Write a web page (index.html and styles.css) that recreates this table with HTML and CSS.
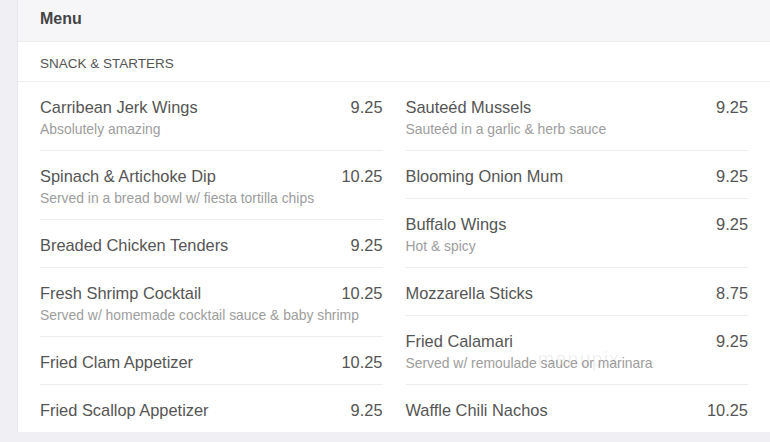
FILE: index.html
```html
<!DOCTYPE html>
<html lang="en">
  <head>
    <meta charset="UTF-8" />
    <meta name="viewport" content="width=device-width, initial-scale=1.0" />
    <title>Menu</title>
    <link rel="stylesheet" href="styles.css">
  </head>

  <body>
    <div class="card">
      <div class="card-header">Menu</div>
      <div class="section-title">SNACK &amp; STARTERS</div>

      <div class="columns">
        <!-- Left column -->
        <div class="column">
          <div class="item">
            <div class="item-row"><span class="name">Carribean Jerk Wings</span><span class="price">9.25</span></div>
            <div class="desc">Absolutely amazing</div>
          </div>
          <div class="item">
            <div class="item-row"><span class="name">Spinach &amp; Artichoke Dip</span><span class="price">10.25</span></div>
            <div class="desc">Served in a bread bowl w/ fiesta tortilla chips</div>
          </div>
          <div class="item">
            <div class="item-row"><span class="name">Breaded Chicken Tenders</span><span class="price">9.25</span></div>
          </div>
          <div class="item">
            <div class="item-row"><span class="name">Fresh Shrimp Cocktail</span><span class="price">10.25</span></div>
            <div class="desc">Served w/ homemade cocktail sauce &amp; baby shrimp</div>
          </div>
          <div class="item">
            <div class="item-row"><span class="name">Fried Clam Appetizer</span><span class="price">10.25</span></div>
          </div>
          <div class="item">
            <div class="item-row"><span class="name">Fried Scallop Appetizer</span><span class="price">9.25</span></div>
          </div>
        </div>

        <!-- Right column -->
        <div class="column">
          <div class="item">
            <div class="item-row"><span class="name">Sauteéd Mussels</span><span class="price">9.25</span></div>
            <div class="desc">Sauteéd in a garlic &amp; herb sauce</div>
          </div>
          <div class="item">
            <div class="item-row"><span class="name">Blooming Onion Mum</span><span class="price">9.25</span></div>
          </div>
          <div class="item">
            <div class="item-row"><span class="name">Buffalo Wings</span><span class="price">9.25</span></div>
            <div class="desc">Hot &amp; spicy</div>
          </div>
          <div class="item">
            <div class="item-row"><span class="name">Mozzarella Sticks</span><span class="price">8.75</span></div>
          </div>
          <div class="item watermarked">
            <div class="item-row"><span class="name">Fried Calamari</span><span class="price">9.25</span></div>
            <div class="desc">Served w/ remoulade sauce or marinara</div>
            <span class="watermark">menupix</span>
          </div>
          <div class="item">
            <div class="item-row"><span class="name">Waffle Chili Nachos</span><span class="price">10.25</span></div>
          </div>
        </div>
      </div>
    </div>
  </body>
</html>
```

FILE: styles.css
```css
body {
  font-family: "Liberation Sans", Arial, sans-serif;
  margin: 0;
  padding: 0 0 8px 17px;
  background-color: #efeff4;
  color: #555;
}

.card {
  background: #fff;
  border-left: 1px solid #e8e8ee;
}

.card-header {
  height: 42px;
  line-height: 38px;
  padding: 0 22px;
  background: #f6f6f9;
  border-bottom: 1px solid #ececf1;
  font-size: 16px;
  font-weight: bold;
  color: #444;
  box-sizing: border-box;
}

.section-title {
  height: 40px;
  line-height: 43px;
  padding: 0 22px;
  font-size: 13.5px;
  color: #555;
  border-bottom: 1px solid #efeff2;
  box-sizing: border-box;
}

.columns {
  display: flex;
  gap: 23px;
  padding: 0 22px;
}

.column {
  flex: 1;
}

.item {
  padding: 14px 0 11px;
  border-bottom: 1px solid #ededf0;
}

.column .item:last-child {
  border-bottom: none;
}

.item-row {
  display: flex;
  justify-content: space-between;
  font-size: 16.4px;
  line-height: 22px;
  color: #555;
}

.desc {
  font-size: 13.9px;
  line-height: 20px;
  color: #9d9d9d;
  margin-top: 1px;
}

.watermarked {
  position: relative;
}

.watermark {
  position: absolute;
  left: 132px;
  top: 32px;
  font-size: 20px;
  letter-spacing: 1px;
  color: rgba(0, 0, 0, 0.07);
}
```
